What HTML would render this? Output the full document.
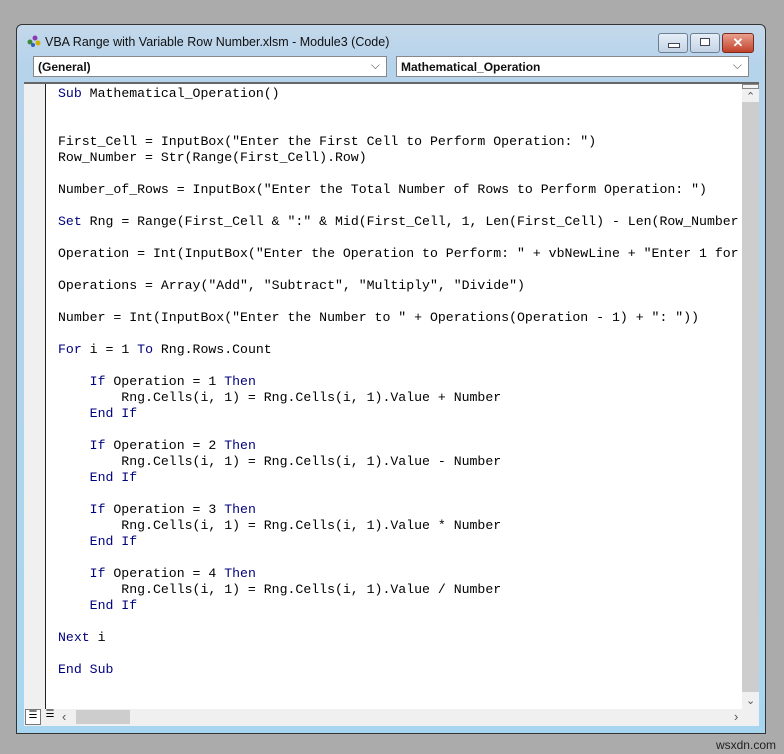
<!DOCTYPE html>
<html><head><style>
body{margin:0;width:784px;height:754px;background:#ababab;position:relative;overflow:hidden;font-family:"Liberation Sans",sans-serif}
.win{position:absolute;left:16px;top:24px;width:750px;height:710px;border:1px solid #333;border-radius:6px 6px 0 0;box-sizing:border-box;background:linear-gradient(#c4d8ea,#b6d3ec 40px,#a8d6f0)}
.title{position:absolute;left:28px;top:10px;font-size:12.5px;color:#111}
.btn{position:absolute;top:8px;height:18px;border:1px solid #6c7f94;border-radius:3px;background:linear-gradient(#e6eef7,#c3d3e4)}
.combo{position:absolute;top:31px;height:21px;background:#fff;border:1px solid #888;box-sizing:border-box;font-size:12px;font-weight:bold;padding:3px 4px;color:#111}
.combo .ch{position:absolute;right:6px;top:1px;font-weight:normal;color:#555;font-size:12px}
.code{position:absolute;left:7px;top:57px;width:735px;height:627px;background:#fff;border-top:2px solid #666}
.margin{position:absolute;left:0;top:0;width:21px;height:100%;background:#f0f0f0;border-right:1px solid #222}
pre{position:absolute;left:34px;top:2px;margin:0;font-family:"Liberation Mono",monospace;font-size:13.2px;line-height:16px;color:#000}
.k{color:#00007f}
.vs{position:absolute;right:0;top:0;width:17px;height:627px;background:#f0f0f0}
.hs{position:absolute;left:7px;top:684px;width:735px;height:17px;background:#f0f0f0}
</style></head><body>
<div class="win">
<svg style="position:absolute;left:9px;top:9px" width="16" height="14"><circle cx="4" cy="8" r="2.5" fill="#3a8a3a"/><circle cx="9" cy="4" r="2.5" fill="#8a3ab0"/><circle cx="12" cy="9" r="2.5" fill="#d0b000"/><circle cx="7" cy="11" r="2" fill="#3060c0"/></svg>
<div class="title">VBA Range with Variable Row Number.xlsm - Module3 (Code)</div>
<div class="btn" style="left:641px;width:28px"><div style="position:absolute;left:9px;top:9px;width:10px;height:3px;border:1px solid #445;background:#fff"></div></div>
<div class="btn" style="left:673px;width:28px"><div style="position:absolute;left:9px;top:4px;width:8px;height:6px;border:1px solid #445;background:#fff"></div></div>
<div class="btn" style="left:705px;width:30px;background:linear-gradient(#e8a08e,#c2412a);border-color:#7a2a1e;color:#fff;font-weight:bold;text-align:center;font-size:13px;line-height:18px">✕</div>
<div class="combo" style="left:16px;width:354px">(General)<span class="ch">⌵</span></div>
<div class="combo" style="left:379px;width:353px">Mathematical_Operation<span class="ch">⌵</span></div>
<div class="code"><div class="margin"></div>
<pre><span class="k">Sub</span> Mathematical_Operation()


First_Cell = InputBox("Enter the First Cell to Perform Operation: ")
Row_Number = Str(Range(First_Cell).Row)

Number_of_Rows = InputBox("Enter the Total Number of Rows to Perform Operation: ")

<span class="k">Set</span> Rng = Range(First_Cell &amp; ":" &amp; Mid(First_Cell, 1, Len(First_Cell) - Len(Row_Number

Operation = Int(InputBox("Enter the Operation to Perform: " + vbNewLine + "Enter 1 for

Operations = Array("Add", "Subtract", "Multiply", "Divide")

Number = Int(InputBox("Enter the Number to " + Operations(Operation - 1) + ": "))

<span class="k">For</span> i = 1 <span class="k">To</span> Rng.Rows.Count

    <span class="k">If</span> Operation = 1 <span class="k">Then</span>
        Rng.Cells(i, 1) = Rng.Cells(i, 1).Value + Number
    <span class="k">End If</span>

    <span class="k">If</span> Operation = 2 <span class="k">Then</span>
        Rng.Cells(i, 1) = Rng.Cells(i, 1).Value - Number
    <span class="k">End If</span>

    <span class="k">If</span> Operation = 3 <span class="k">Then</span>
        Rng.Cells(i, 1) = Rng.Cells(i, 1).Value * Number
    <span class="k">End If</span>

    <span class="k">If</span> Operation = 4 <span class="k">Then</span>
        Rng.Cells(i, 1) = Rng.Cells(i, 1).Value / Number
    <span class="k">End If</span>

<span class="k">Next</span> i

<span class="k">End Sub</span></pre>
<div class="vs"><div style="position:absolute;left:0;top:0;width:17px;height:5px;border:1px solid #888;box-sizing:border-box;background:#f4f4f4"></div><div style="position:absolute;left:4px;top:6px;font-size:11px;color:#555">⌃</div><div style="position:absolute;left:0;top:18px;width:17px;height:590px;background:#cdcdcd"></div><div style="position:absolute;left:4px;top:610px;font-size:11px;color:#555">⌄</div></div>
</div>
<div class="hs"><div style="position:absolute;left:1px;top:0;width:16px;height:16px;border:1px solid #777;box-sizing:border-box;background:#fff;font-size:10px;text-align:center">☰</div><div style="position:absolute;left:18px;top:0;width:16px;height:16px;font-size:10px;text-align:center">☰</div><div style="position:absolute;left:38px;top:0;font-size:13px;color:#555">‹</div><div style="position:absolute;left:52px;top:1px;width:54px;height:14px;background:#cdcdcd"></div><div style="position:absolute;left:710px;top:0;font-size:13px;color:#555">›</div></div>
</div>
<div style="position:absolute;right:8px;top:738px;font-size:12px;color:#222">wsxdn.com</div>
</body></html>
